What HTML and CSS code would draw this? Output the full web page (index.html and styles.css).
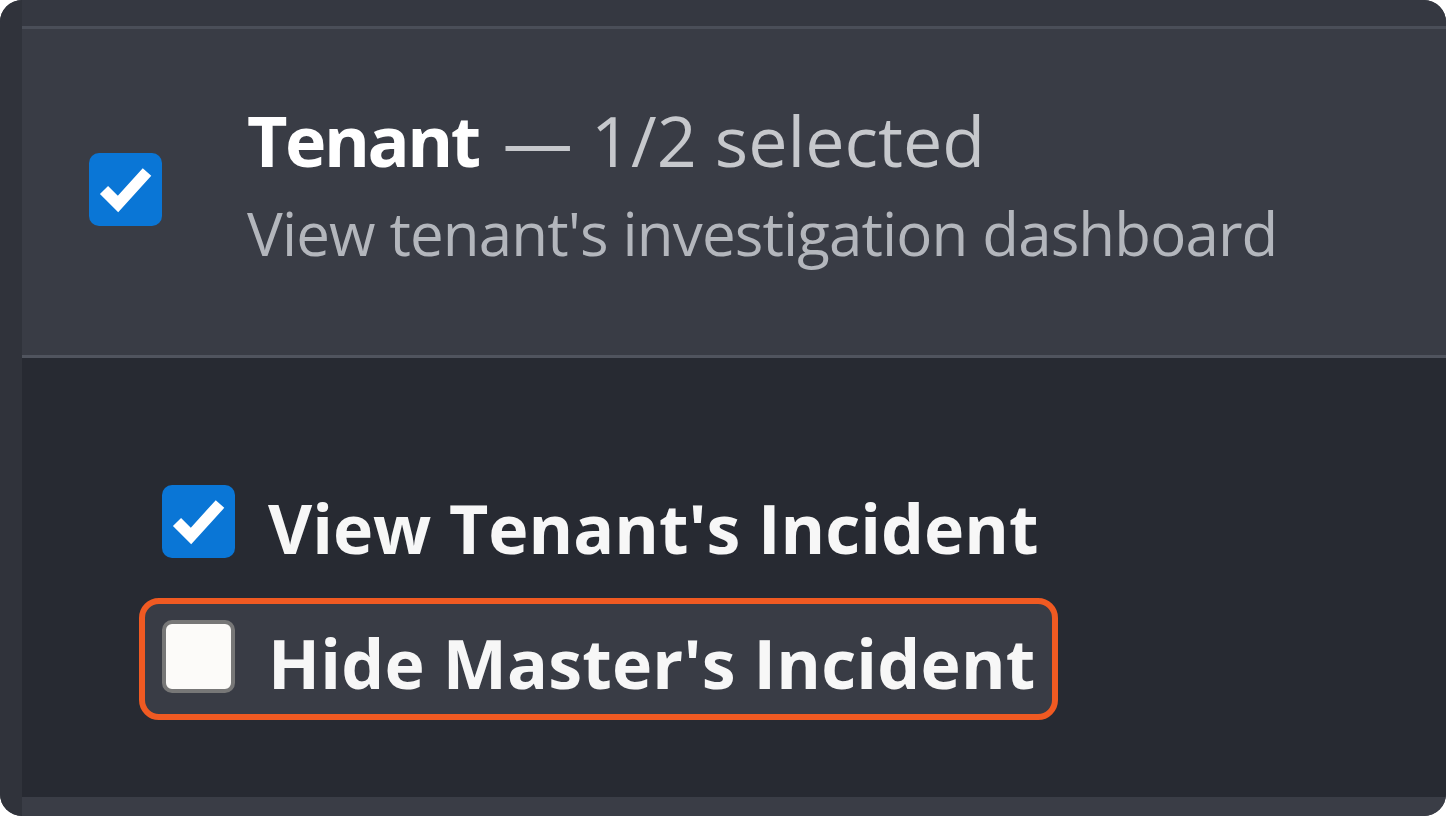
FILE: index.html
```html
<!DOCTYPE html>
<html>
<head>
<meta charset="utf-8">
<link rel="stylesheet" href="styles.css">
</head>
<body>
<div class="frame">
  <div class="side"></div>
  <div class="main">
    <div class="topband"></div>
    <div class="header">
      <span class="cb cb-checked header-cb">
        <svg viewBox="0 0 73 73" width="73" height="73"><polyline points="15,37 29,51 58,19" fill="none" stroke="#fff" stroke-width="11.5"/></svg>
      </span>
      <div class="header-text">
        <div class="title"><span class="title-name">Tenant</span><span class="title-count"> — 1/2 selected</span></div>
        <div class="subtitle">View tenant's investigation dashboard</div>
      </div>
    </div>
    <div class="body">
      <div class="options">
        <label class="option">
          <span class="cb cb-checked">
            <svg viewBox="0 0 73 73" width="73" height="73"><polyline points="15,37 29,51 58,19" fill="none" stroke="#fff" stroke-width="11.5"/></svg>
          </span>
          <span class="option-label">View Tenant's Incident</span>
        </label>
        <label class="option option-highlight">
          <span class="cb cb-empty"></span>
          <span class="option-label">Hide Master's Incident</span>
        </label>
      </div>
    </div>
    <div class="footer"></div>
  </div>
</div>
</body>
</html>
```
FILE: styles.css
```css
html, body {
  margin: 0;
  padding: 0;
  background: #ffffff;
}
body {
  font-family: "Open Sans", "Noto Sans", sans-serif;
}
.frame {
  width: 1446px;
  height: 816px;
  border-radius: 22px;
  overflow: hidden;
  display: flex;
  background: #30333b;
}
.side {
  width: 22px;
  flex: none;
  background: #30333b;
}
.main {
  flex: 1;
  display: flex;
  flex-direction: column;
}
.topband {
  height: 26px;
  background: #353841;
  border-bottom: 3px solid #4a4e58;
  flex: none;
}
.header {
  height: 329px;
  flex: none;
  background: #393c45;
  border-bottom: 3px solid #50545e;
  display: flex;
  align-items: center;
  padding-left: 67px;
  box-sizing: border-box;
}
.cb {
  width: 73px;
  height: 73px;
  border-radius: 10px;
  flex: none;
  display: block;
  box-sizing: border-box;
}
.header-cb {
  margin-top: -6px;
}
.cb svg {
  display: block;
}
.cb-checked {
  background: #0a76d6;
}
.cb-empty {
  background: #fcfbf9;
  border: 4px solid #777777;
}
.header-text {
  margin-left: 85px;
  margin-top: -10px;
}
.title {
  font-size: 70px;
  line-height: 93px;
  white-space: nowrap;
}
.title-name {
  font-weight: 700;
  color: #ffffff;
  letter-spacing: -2.5px;
  margin-right: 6px;
}
.title-count {
  color: #c6c8cc;
}
.subtitle {
  font-size: 60px;
  line-height: 93px;
  color: #b3b6bc;
  white-space: nowrap;
  letter-spacing: -0.85px;
}
.body {
  flex: 1;
  background: #272a32;
  padding-top: 105px;
  padding-left: 117px;
}
.options {
  display: flex;
  flex-direction: column;
  align-items: flex-start;
  gap: 13px;
}
.option {
  display: flex;
  align-items: flex-start;
  height: 122px;
  box-sizing: border-box;
  border: 6px solid transparent;
  border-radius: 20px;
  padding: 16px 16px 0 17px;
}
.option-highlight {
  border-color: #f05a22;
  background: #393c45;
}
.option-label {
  margin-left: 33px;
  margin-top: 6px;
  font-size: 68px;
  line-height: 73px;
  font-weight: 700;
  color: #f7f7f7;
  white-space: nowrap;
}
.option-highlight .option-label {
  letter-spacing: 0.2px;
}
.footer {
  height: 19px;
  flex: none;
  background: #3a3d46;
}
```
